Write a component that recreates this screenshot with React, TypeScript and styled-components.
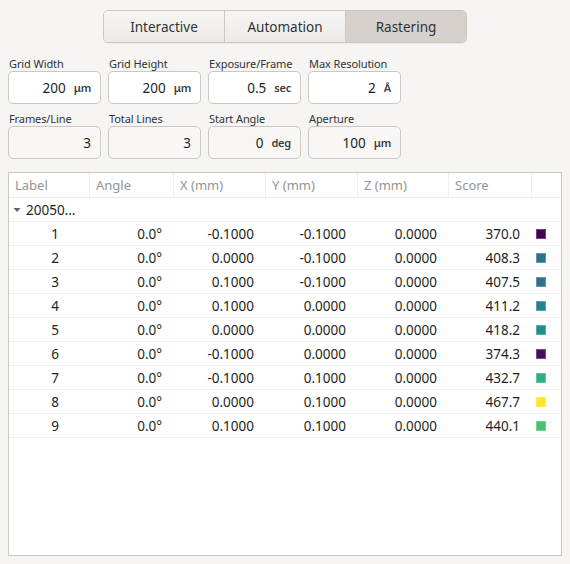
import React from 'react'
import styled, { createGlobalStyle } from 'styled-components'

const GlobalStyle = createGlobalStyle`
  html, body {
    margin: 0;
    padding: 0;
    background: #f6f5f4;
  }
  body {
    font-family: 'Noto Sans', 'DejaVu Sans', sans-serif;
    color: #2e3436;
  }
`

type Field = { label: string; value: string; unit?: string }

const topFields: Field[] = [
  { label: 'Grid Width', value: '200', unit: 'μm' },
  { label: 'Grid Height', value: '200', unit: 'μm' },
  { label: 'Exposure/Frame', value: '0.5', unit: 'sec' },
  { label: 'Max Resolution', value: '2', unit: 'Å' },
]

const bottomFields: Field[] = [
  { label: 'Frames/Line', value: '3' },
  { label: 'Total Lines', value: '3' },
  { label: 'Start Angle', value: '0', unit: 'deg' },
  { label: 'Aperture', value: '100', unit: 'μm' },
]

type Point = {
  label: string
  angle: string
  x: string
  y: string
  z: string
  score: string
  color: string
}

const points: Point[] = [
  { label: '1', angle: '0.0°', x: '-0.1000', y: '-0.1000', z: '0.0000', score: '370.0', color: '#440154' },
  { label: '2', angle: '0.0°', x: '0.0000', y: '-0.1000', z: '0.0000', score: '408.3', color: '#2b748e' },
  { label: '3', angle: '0.0°', x: '0.1000', y: '-0.1000', z: '0.0000', score: '407.5', color: '#2c728e' },
  { label: '4', angle: '0.0°', x: '0.1000', y: '0.0000', z: '0.0000', score: '411.2', color: '#26828e' },
  { label: '5', angle: '0.0°', x: '0.0000', y: '0.0000', z: '0.0000', score: '418.2', color: '#21918c' },
  { label: '6', angle: '0.0°', x: '-0.1000', y: '0.0000', z: '0.0000', score: '374.3', color: '#470d60' },
  { label: '7', angle: '0.0°', x: '-0.1000', y: '0.1000', z: '0.0000', score: '432.7', color: '#2db27d' },
  { label: '8', angle: '0.0°', x: '0.0000', y: '0.1000', z: '0.0000', score: '467.7', color: '#fde725' },
  { label: '9', angle: '0.0°', x: '0.1000', y: '0.1000', z: '0.0000', score: '440.1', color: '#48c16e' },
]

const columns = ['Label', 'Angle', 'X (mm)', 'Y (mm)', 'Z (mm)', 'Score', '']

const Page = styled.div`
  height: 564px;
  box-sizing: border-box;
  padding: 10px 8px 8px 8px;
  display: flex;
  flex-direction: column;
`

const TabBar = styled.div`
  align-self: center;
  display: flex;
  width: 364px;
  height: 33px;
  box-sizing: border-box;
  border: 1px solid #cdc7c2;
  border-radius: 5px;
  overflow: hidden;
  box-shadow: 0 1px 1px rgba(0, 0, 0, 0.04);
`

const Tab = styled.div<{ $active?: boolean }>`
  flex: 1;
  display: flex;
  align-items: center;
  justify-content: center;
  font-size: 13.5px;
  color: #2e3436;
  background: ${(p) => (p.$active ? '#d6d1cd' : 'linear-gradient(#f7f6f5, #edebe9)')};
  & + & {
    border-left: 1px solid #cdc7c2;
  }
`

const FieldGrid = styled.div`
  display: grid;
  grid-template-columns: repeat(4, 93px);
  column-gap: 7px;
  row-gap: 8px;
  margin-top: 14px;
`

const FieldGroup = styled.div`
  display: flex;
  flex-direction: column;
`

const FieldLabel = styled.div`
  font-size: 11px;
  line-height: 14px;
  color: #2e3436;
  padding-left: 1px;
  letter-spacing: -0.1px;
`

const FieldBox = styled.div<{ $muted?: boolean }>`
  height: 33px;
  box-sizing: border-box;
  border: 1px solid #cdc7c2;
  border-radius: 5px;
  background: ${(p) => (p.$muted ? '#f8f7f6' : '#ffffff')};
  display: flex;
  align-items: center;
  justify-content: flex-end;
  padding: 0 9px 0 8px;
  gap: 8px;
`

const FieldValue = styled.span`
  font-size: 13.5px;
  color: #1d1f20;
`

const FieldUnit = styled.span`
  font-size: 11px;
  font-weight: 600;
  color: #3d3f40;
  letter-spacing: -0.2px;
`

const Table = styled.div`
  margin-top: 13px;
  flex: 1;
  border: 1px solid #cdc7c2;
  background: #ffffff;
  display: flex;
  flex-direction: column;
`

const Row = styled.div`
  display: grid;
  grid-template-columns: 80px 84px 92px 92px 91px 83px 1fr;
  height: 24px;
  box-sizing: border-box;
  border-bottom: 1px solid #f0efee;
  font-size: 13.5px;
  color: #1d1f20;
`

const HeaderRow = styled(Row)`
  height: 25px;
  border-bottom: 1px solid #ecebea;
`

const HeaderCell = styled.div`
  display: flex;
  align-items: center;
  padding-left: 6px;
  color: #929595;
  font-size: 13px;
  & + & {
    border-left: 1px solid #efeeed;
  }
`

const Cell = styled.div<{ $align?: 'left' | 'center' | 'right' }>`
  display: flex;
  align-items: center;
  justify-content: ${(p) =>
    p.$align === 'center' ? 'center' : p.$align === 'left' ? 'flex-start' : 'flex-end'};
  padding-right: ${(p) => (p.$align === 'right' || !p.$align ? '11px' : '0')};
`

const LabelCell = styled(Cell)`
  padding-left: 12px;
`

const GroupCell = styled.div`
  grid-column: 1 / -1;
  display: flex;
  align-items: center;
  padding-left: 4px;
  gap: 5px;
`

const Swatch = styled.span<{ $color: string }>`
  width: 10px;
  height: 10px;
  box-sizing: border-box;
  background: ${(p) => p.$color};
  border: 1px solid rgba(255, 255, 255, 0.25);
  margin-left: 5px;
`

const SwatchCell = styled.div`
  display: flex;
  align-items: center;
`

const Expander = () => (
  <svg width="8" height="8" viewBox="0 0 8 8">
    <path d="M0.5 2 L7.5 2 L4 6 Z" fill="#5e6264" />
  </svg>
)

const FieldItem = ({ field, muted }: { field: Field; muted?: boolean }) => (
  <FieldGroup>
    <FieldLabel>{field.label}</FieldLabel>
    <FieldBox $muted={muted}>
      <FieldValue>{field.value}</FieldValue>
      {field.unit && <FieldUnit>{field.unit}</FieldUnit>}
    </FieldBox>
  </FieldGroup>
)

const App = (): React.ReactElement => (
  <>
    <GlobalStyle />
    <Page>
      <TabBar>
        <Tab>Interactive</Tab>
        <Tab>Automation</Tab>
        <Tab $active>Rastering</Tab>
      </TabBar>
      <FieldGrid>
        {topFields.map((f) => (
          <FieldItem key={f.label} field={f} />
        ))}
        {bottomFields.map((f) => (
          <FieldItem key={f.label} field={f} muted />
        ))}
      </FieldGrid>
      <Table>
        <HeaderRow>
          {columns.map((c, i) => (
            <HeaderCell key={i}>{c}</HeaderCell>
          ))}
        </HeaderRow>
        <Row>
          <GroupCell>
            <Expander />
            <span>20050...</span>
          </GroupCell>
        </Row>
        {points.map((p) => (
          <Row key={p.label}>
            <LabelCell $align="center">{p.label}</LabelCell>
            <Cell>{p.angle}</Cell>
            <Cell>{p.x}</Cell>
            <Cell>{p.y}</Cell>
            <Cell>{p.z}</Cell>
            <Cell>{p.score}</Cell>
            <SwatchCell>
              <Swatch $color={p.color} />
            </SwatchCell>
          </Row>
        ))}
      </Table>
    </Page>
  </>
)

export default App
